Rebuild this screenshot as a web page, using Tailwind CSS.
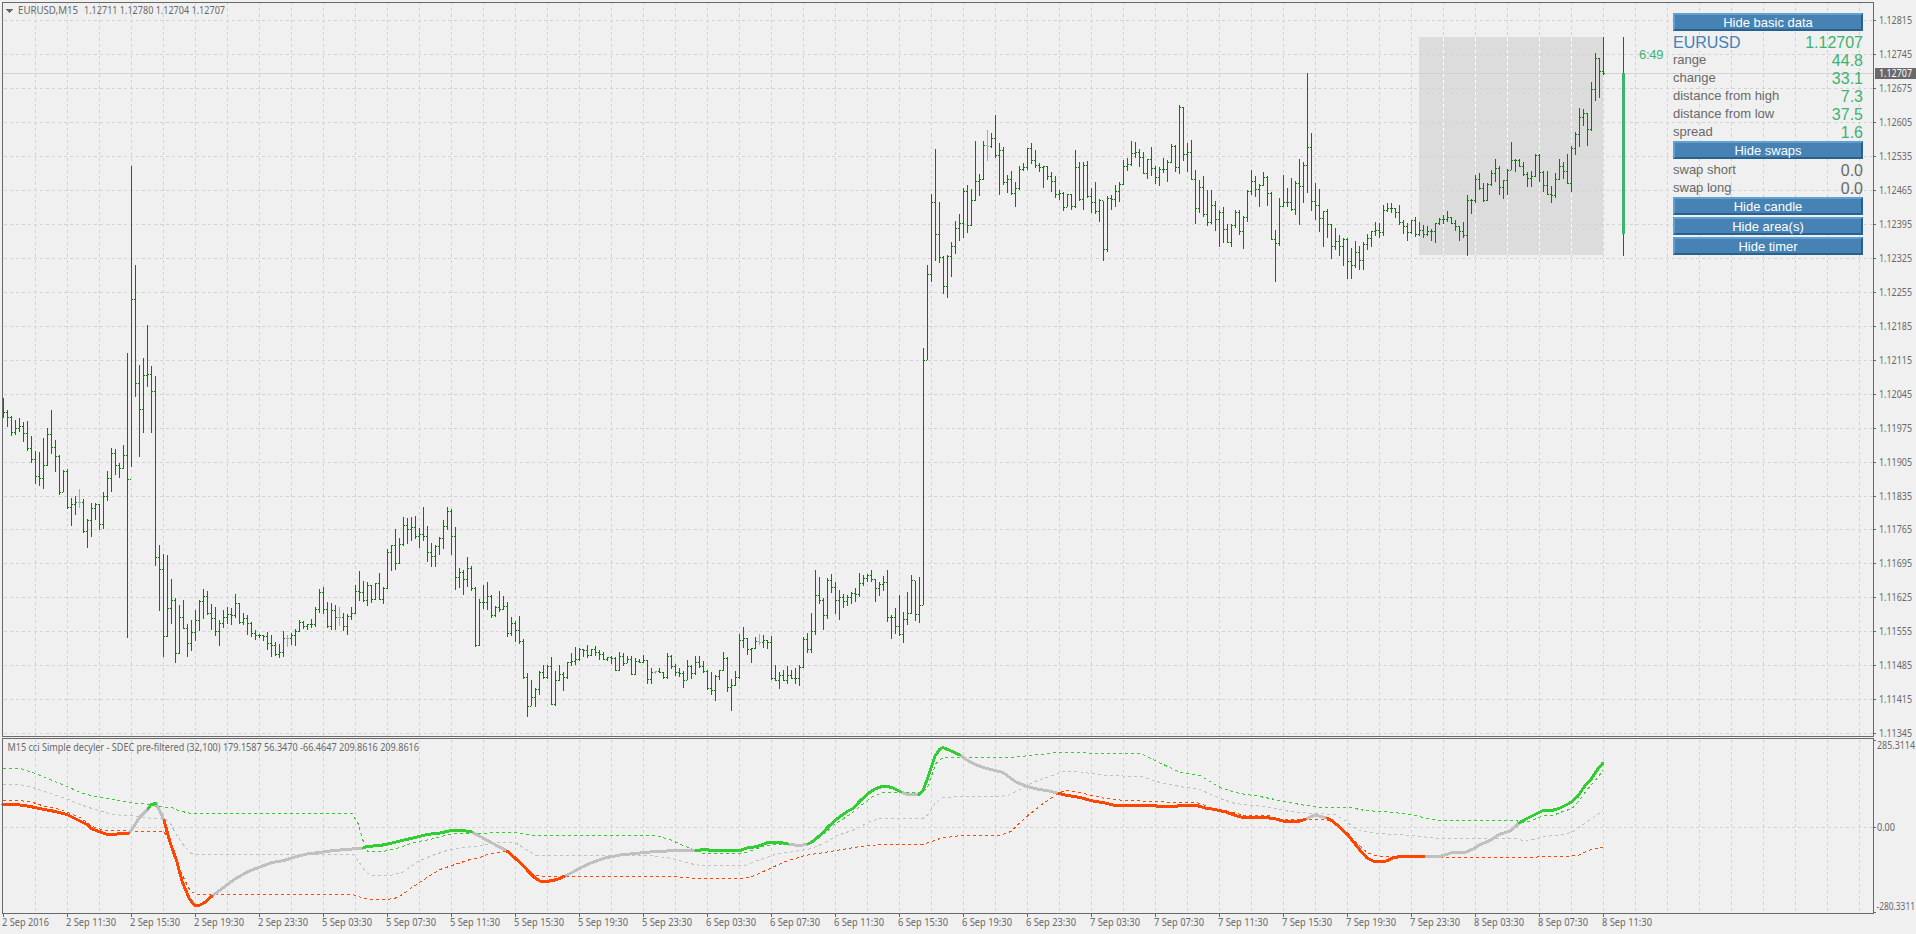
<!DOCTYPE html>
<html lang="en">
<head>
    <meta charset="UTF-8">
    <meta name="viewport" content="width=device-width, initial-scale=1.0">
    <title>EURUSD,M15</title>
    <script src="https://cdn.jsdelivr.net/npm/@tailwindcss/browser@4"></script>
</head>
<body class="relative w-[1916px] h-[934px] overflow-hidden bg-[#f0f0f0] font-['Liberation_Sans',Arial,sans-serif]">
    <svg id="chart" width="1916" height="934" viewBox="0 0 1916 934" class="block font-['Noto_Sans',sans-serif] text-[10px]">
        <g id="area"></g>
        <g id="grid" shape-rendering="crispEdges"></g>
        <g id="bars" shape-rendering="crispEdges"></g>
        <g id="indicator" fill="none" shape-rendering="crispEdges"></g>
        <g id="frame" shape-rendering="crispEdges" fill="#696969"></g>
        <g id="labels" fill="#696969"></g>
    </svg>

    <main class="absolute top-[13px] left-[1673px] w-[190px] flex flex-col text-[13px] leading-[18px] text-[#696969]">
        <button class="h-[18px] pt-[2px] flex items-center justify-center bg-[#4682b4] text-white border-2 border-t-[#5f9fd3] border-l-[#5f9fd3] border-b-[#286090] border-r-[#286090]">Hide basic data</button>
        <div class="flex justify-between h-[18px] mt-[2px] text-base leading-[18px]">
            <span class="text-[#4682b4] relative top-[1px]">EURUSD</span><span class="text-[#3cb371] relative top-[1px]">1.12707</span>
        </div>
        <div class="flex justify-between h-[18px]"><span>range</span><span class="text-base leading-[19px] text-[#3cb371]">44.8</span></div>
        <div class="flex justify-between h-[18px]"><span>change</span><span class="text-base leading-[19px] text-[#3cb371]">33.1</span></div>
        <div class="flex justify-between h-[18px]"><span>distance from high</span><span class="text-base leading-[19px] text-[#3cb371]">7.3</span></div>
        <div class="flex justify-between h-[18px]"><span>distance from low</span><span class="text-base leading-[19px] text-[#3cb371]">37.5</span></div>
        <div class="flex justify-between h-[18px]"><span>spread</span><span class="text-base leading-[19px] text-[#3cb371]">1.6</span></div>
        <button class="h-[18px] pt-[2px] flex items-center justify-center bg-[#4682b4] text-white border-2 border-t-[#5f9fd3] border-l-[#5f9fd3] border-b-[#286090] border-r-[#286090]">Hide swaps</button>
        <div class="flex justify-between h-[18px] mt-[2px]"><span>swap short</span><span class="text-base leading-[19px]">0.0</span></div>
        <div class="flex justify-between h-[18px]"><span>swap long</span><span class="text-base leading-[19px]">0.0</span></div>
        <div class="flex flex-col gap-[2px]">
            <button class="h-[18px] pt-[2px] flex items-center justify-center bg-[#4682b4] text-white border-2 border-t-[#5f9fd3] border-l-[#5f9fd3] border-b-[#286090] border-r-[#286090]">Hide candle</button>
            <button class="h-[18px] pt-[2px] flex items-center justify-center bg-[#4682b4] text-white border-2 border-t-[#5f9fd3] border-l-[#5f9fd3] border-b-[#286090] border-r-[#286090]">Hide area(s)</button>
            <button class="h-[18px] pt-[2px] flex items-center justify-center bg-[#4682b4] text-white border-2 border-t-[#5f9fd3] border-l-[#5f9fd3] border-b-[#286090] border-r-[#286090]">Hide timer</button>
        </div>
    </main>

    <script>
        const NS = 'http://www.w3.org/2000/svg';
        const layer = id => document.getElementById(id);

        function add(parent, tag, attrs, text) {
            const el = document.createElementNS(NS, tag);
            for (const key in attrs) el.setAttribute(key, attrs[key]);
            if (text !== undefined) el.textContent = text;
            parent.appendChild(el);
            return el;
        }
        function rect(parent, x, y, width, height, fill) {
            const attrs = { x, y, width, height };
            if (fill) attrs.fill = fill;
            return add(parent, 'rect', attrs);
        }
        function label(x, y, textLength, text, fill) {
            const attrs = { x, y, textLength, lengthAdjust: 'spacingAndGlyphs', style: 'white-space:pre' };
            if (fill) attrs.fill = fill;
            return add(layer('labels'), 'text', attrs, text);
        }

        // Session area
        rect(layer('area'), 1419, 37, 184, 218, '#dcdcdc');

        // Grid
        const priceRows = [20, 54, 88, 122, 156, 190, 224, 258, 292, 326, 360, 394, 428, 462, 496, 529, 563, 597, 631, 665, 699, 733];
        const grid = layer('grid');
        function dashed(d, stroke) {
            add(grid, 'path', { d, stroke, 'stroke-dasharray': '3 3', fill: 'none' });
        }
        priceRows.concat(827).forEach(y => dashed(`M4 ${y + 0.5}H1873`, '#d3d3d3'));
        for (let x = 35; x < 1873; x += 32) {
            dashed(`M${x + 0.5} 2V736`, '#d3d3d3');
            dashed(`M${x + 0.5} 740V913`, '#d3d3d3');
            if (x > 1419 && x < 1603) {
                rect(grid, x, 37, 1, 218, '#dcdcdc');
                dashed(`M${x + 0.5} 38V255`, '#ffffff');
            }
        }
        rect(grid, 3, 73, 1870, 1, '#d3d3d3');

        // Bars: high, low, close (in pixels), one every 4px
        const bars = `398,418,412 410,427,417 416,436,432 420,435,428 418,432,426 422,442,433 421,451,448 436,463,459 451,484,476 452,486,478
438,489,465 428,466,434 410,454,447 440,472,456 455,495,492 470,492,471 469,509,507 498,526,504 496,515,502 489,508,502
499,533,531 519,548,520 503,537,508 503,520,504 504,530,524 492,529,496 471,501,478 448,492,453 449,475,465 463,478,468
445,469,455 353,638,479 166,467,299 265,397,383 365,457,409 358,433,375 325,387,374 366,433,391 376,566,557 545,611,569
554,657,636 555,637,608 579,624,600 598,663,653 605,654,617 600,629,628 624,657,643 620,651,632 610,641,620 600,631,601
589,619,596 591,615,613 604,630,618 607,636,631 620,646,623 610,628,617 607,624,614 608,625,615 594,618,603 603,624,622
613,625,618 615,635,623 622,637,633 630,640,635 634,638,635 635,641,636 632,650,643 635,657,645 642,656,654 644,658,652
631,657,638 635,647,638 633,645,635 629,646,631 620,632,622 621,629,626 624,630,624 619,628,624 607,627,609 589,613,592
587,614,609 602,628,626 603,630,610 605,630,617 607,626,617 613,631,626 614,635,616 607,620,613 585,614,591 571,601,592
581,602,600 582,606,585 585,603,599 583,600,583 573,600,599 587,604,588 549,589,552 545,571,545 529,570,563 538,564,544
517,546,525 518,544,529 517,541,527 516,539,536 528,548,534 507,541,536 526,562,552 543,567,556 545,567,546 537,555,538
520,549,526 507,530,511 509,555,536 527,590,577 568,588,572 570,595,579 557,587,568 566,591,588 587,647,645 599,646,602
585,609,602 582,610,596 595,618,615 606,617,607 591,612,609 596,610,606 602,637,633 617,636,623 621,642,630 616,644,641
639,679,677 673,717,706 680,706,697 688,707,689 671,695,672 665,679,677 665,679,666 657,705,704 671,706,680 665,681,674
672,691,677 662,679,662 653,666,661 647,665,659 648,661,649 649,657,650 645,658,655 649,656,649 646,656,652 650,660,654
652,660,659 657,661,657 656,664,658 657,671,670 652,671,656 653,666,663 656,663,659 656,675,674 658,675,661 659,663,662
655,663,660 660,684,679 668,684,672 671,674,671 668,673,672 672,679,677 653,679,656 655,669,666 664,676,672 668,677,673
671,688,680 660,680,666 665,679,673 656,675,662 656,668,666 661,673,671 670,690,688 672,695,690 675,701,676 670,680,670
652,671,658 657,692,687 679,711,685 671,686,677 634,679,640 627,648,638 638,655,649 648,663,648 637,649,641 634,645,642
635,648,640 640,649,642 636,680,678 665,681,680 672,689,675 670,681,680 666,684,675 670,679,678 668,684,678 665,686,667
637,668,639 633,653,649 613,653,631 570,635,595 577,604,600 598,630,615 578,619,580 574,593,587 582,614,600 590,620,597
594,608,601 595,606,597 592,604,593 588,602,594 573,597,583 575,586,578 574,582,575 570,582,579 579,602,588 582,596,584
576,591,582 570,622,617 615,639,617 608,634,626 595,636,634 612,643,619 592,625,613 575,614,580 581,621,614 577,623,605
348,605,360 265,360,274 194,282,202 149,261,234 202,263,257 256,294,286 255,298,256 242,277,246 221,254,228 214,241,223
188,238,191 185,233,225 189,226,200 141,201,181 174,196,179 141,180,145 130,161,146 133,148,138 115,158,155 143,195,150
147,185,182 175,193,179 171,195,193 182,207,188 166,190,169 163,171,167 148,170,148 143,164,160 150,168,165 163,172,167
166,188,166 166,180,176 172,192,181 176,198,194 190,200,193 192,211,207 194,207,194 194,210,206 150,208,167 162,201,199
162,210,165 161,198,196 188,213,202 182,214,211 199,222,200 201,261,249 196,252,198 195,210,199 185,207,191 182,202,184
160,185,166 158,171,164 141,166,153 142,158,152 149,167,157 152,174,173 159,179,159 147,176,168 166,184,177 167,186,169
158,173,169 160,182,162 144,163,146 145,172,167 105,174,107 107,161,154 143,172,152 140,180,179 170,224,208 180,213,187
176,217,214 190,226,222 190,224,205 201,231,219 210,247,212 207,243,229 224,243,242 224,247,225 210,228,212 210,235,231
216,249,217 190,222,191 170,195,181 176,197,189 184,207,185 172,186,177 176,206,193 192,240,239 230,282,243 198,246,206
175,207,202 188,207,202 178,211,209 181,215,183 159,225,186 162,203,165 73,193,147 133,211,201 183,220,205 189,232,218
211,247,211 209,238,224 224,259,246 228,250,241 235,256,246 238,266,239 238,279,261 248,279,265 241,268,252 246,270,260
242,270,244 234,250,238 231,247,231 222,236,230 223,238,232 205,236,210 203,212,208 203,213,208 208,218,212 205,225,222
220,234,226 223,241,232 220,234,220 217,237,234 222,236,230 225,238,234 226,236,231 229,241,231 223,243,223 218,225,219
215,224,219 211,222,217 217,224,223 220,231,226 226,241,231 222,238,235 195,256,200 199,214,200 175,203,179 173,190,188
183,202,200 183,201,184 170,186,173 159,182,168 166,195,187 180,199,180 169,195,170 142,170,160 159,172,160 159,167,166
162,176,174 172,187,178 171,187,176 154,177,155 154,182,172 171,192,185 171,195,194 186,203,195 173,198,179 159,180,166
162,179,171 154,184,183 146,192,148 132,155,134 108,147,117 109,126,113 113,146,129 82,131,89 53,101,58 58,98,71 37,75,73`
            .split(/\s+/).map(b => b.split(',').map(Number));
        const doji = [19, 71, 84, 163, 189, 246];
        let prev = null;
        bars.forEach(([high, low, close], i) => {
            const x = 3 + i * 4;
            const color = doji.includes(i) ? '#a9a9a9' : '#008000';
            rect(layer('bars'), x, high, 1, low - high, color);
            rect(layer('bars'), x + 1, close, 1, 1, color);
            if (prev !== null) rect(layer('bars'), x - 1, prev, 1, 1, color);
            prev = close;
        });

        // Daily candle
        rect(layer('bars'), 1623, 37, 1, 219, '#008000');
        rect(layer('bars'), 1622, 73, 3, 161, '#3cb371');

        // Indicator bands
        const bands = [
            ['#32cd32', '3,768 20,768 30,771 45,777 67,786 80,792 95,796 112,799 130,802 148,804 157,806 172,807 178,810 191,813 352,813 358,823 363,840 368,851 383,851 397,848 413,842 430,839 445,835 455,833 475,833 500,832 516,832 533,835 655,835 670,839 683,845 698,851 703,853 742,853 752,850 765,845 775,844 790,843 800,844 812,843 820,836 828,830 836,823 850,814 862,804 873,796 883,792 919,792 927,788 932,774 936,763 943,757 1010,757 1030,755 1058,752 1083,752 1093,753 1141,753 1155,760 1180,772 1200,775 1210,781 1222,788 1240,793 1260,796 1280,800 1300,804 1320,807 1350,807 1365,810 1395,812 1415,815 1427,818 1440,820 1516,820 1522,822 1530,821 1543,815 1553,815 1560,812 1572,808 1580,799 1588,788 1596,779 1603,770'],
            ['#c0c0c0', '3,784 20,784 33,787 50,793 66,798 80,804 95,809 112,814 140,816 152,818 165,818 170,822 175,832 183,844 191,853 196,854 353,854 358,860 366,872 372,875 390,875 402,872 418,861 432,855 450,849 466,847 480,845 497,842 515,842 523,847 536,855 652,855 672,858 690,863 700,865 745,865 755,861 775,854 800,850 812,848 825,842 837,835 855,829 870,821 880,818 923,818 928,814 935,803 942,797 960,796 998,796 1008,795 1022,788 1035,781 1058,773 1063,771 1078,771 1105,775 1141,776 1160,782 1180,786 1200,789 1220,798 1235,803 1265,806 1290,811 1315,813 1335,814 1345,820 1357,829 1375,833 1400,834 1420,836 1440,838 1516,838 1523,840 1533,839 1545,836 1565,834 1575,830 1583,824 1592,818 1603,810'],
            ['#ff4500', '3,800 20,800 33,802 42,805 60,809 70,813 80,817 92,826 105,830 128,830 135,831 163,831 168,836 175,858 183,876 190,890 196,894 353,894 364,898 372,899 388,899 398,897 412,887 427,877 440,869 455,864 470,859 480,857 490,853 507,851 516,857 525,866 533,874 541,876 675,876 695,878 740,878 752,876 768,869 785,861 805,855 830,851 860,846 880,844 923,844 940,838 960,835 1000,835 1011,831 1017,825 1028,815 1043,803 1058,793 1065,790 1080,792 1105,798 1125,800 1160,801 1173,802 1197,802 1213,808 1230,811 1245,815 1268,815 1280,819 1325,819 1335,823 1347,832 1357,843 1367,852 1378,856 1400,856 1444,857 1530,857 1545,856 1565,856 1578,855 1588,850 1597,848 1603,847']
        ];
        bands.forEach(([stroke, points]) => {
            add(layer('indicator'), 'polyline', { points, stroke, 'stroke-dasharray': '3 3', transform: 'translate(0 0.5)' });
        });

        // Main indicator line, coloured by state
        const R = '#ff4500', S = '#c0c0c0', G = '#32cd32';
        const segments = [
            [S, '129,833 133,828 139,818 148,809'],
            [S, '156,803.5 160,811 164,820.5'],
            [S, '212,896 223,888 235,879 248,871.5 260,867 272,862.5 284,860.5 295,857 307,854 320,852.5 333,850.5 347,849.5 363,848'],
            [S, '472,832 480,836.5 492,843 507,851'],
            [S, '564,876.5 573,872 582,867 592,862.5 605,858 620,855 640,853 655,851.5 680,850.5 696,850.5'],
            [S, '788,844 795,845 803,845 808,844'],
            [S, '901,792 906,794 919,794.5'],
            [S, '960,755 967,760 975,764.5 985,768 995,770.5 1003,772.5 1009,777 1016,782 1027,786.5 1037,789 1049,791 1059,793.5'],
            [S, '1305,819.5 1310,817 1315,815 1321,816.5 1327,818'],
            [S, '1424,856.5 1440,856.5 1443,855.5 1453,852.5 1466,852 1474,848.5 1480,844.5 1488,841.5 1494,838 1499,834.5 1507,832 1510,831 1516,826 1519,823'],
            [R, '3,804.5 17,804.5 30,806.5 42,809 55,811.5 67,814.5 76,819 87,824.5 92,829 106,834 117,834 129,833'],
            [G, '148,809 151,804.5 156,803.5'],
            [R, '164,820.5 170,842 177,862 182,881 189,898 194,905 199,905.5 204,903 212,896'],
            [G, '363,848 367,846.5 380,845.5 390,843.5 400,841 413,838 427,834.5 440,833 451,830.5 463,830.5 472,832'],
            [R, '507,851 515,858 523,865.5 528,871 535,878 540,881 547,881.5 557,879.5 564,876.5'],
            [G, '696,850.5 705,849.5 712,850.5 740,850.5 747,848 757,846.5 768,842.5 780,842.5 788,844'],
            [G, '808,844 812,842 818,837 822,833.5 828,827 836,819.5 848,811 853,808.5 860,801 868,793.5 875,789 882,786.5 888,786.5 893,788 901,792'],
            [G, '919,794.5 923,790.5 927,780 931,768 935,756 940,749 943,747.5 950,750.5 960,755'],
            [R, '1059,793.5 1065,795 1080,797.5 1093,801 1105,803 1115,805.5 1153,805.5 1160,806.5 1175,806.5 1180,805.5 1197,805.5 1205,808 1215,809.5 1226,812 1237,816 1243,817.5 1265,817.5 1276,819 1285,821.5 1298,821.5 1305,819.5'],
            [R, '1327,818 1333,821.5 1340,827.5 1348,835 1356,845 1362,852.5 1367,858 1374,861.5 1385,861.5 1393,858 1400,856.5 1424,856.5'],
            [G, '1519,823 1525,819.5 1536,814 1543,810.5 1552,810.5 1559,808.5 1570,803 1578,796 1584,787 1592,778 1597,770 1603,763']
        ];
        segments.forEach(([stroke, points]) => {
            add(layer('indicator'), 'polyline', { points, stroke, 'stroke-width': 3, 'stroke-linecap': 'round', 'stroke-linejoin': 'round' });
        });

        // Window frames and axis ticks
        const frame = layer('frame');
        [[2, 735], [738, 176]].forEach(([y, h]) => {
            rect(frame, 2, y, 1872, 1);
            rect(frame, 2, y + h - 1, 1872, 1);
            rect(frame, 2, y, 1, h);
            rect(frame, 1873, y, 1, h);
        });
        priceRows.concat(740, 827, 912).forEach(y => rect(frame, 1874, y, 2, 1));
        for (let x = 3; x <= 1603; x += 64) rect(frame, x, 914, 1, 3);
        add(frame, 'path', { d: 'M6 9h7v1h-1v1h-1v1h-1v1h-1v-1h-1v-1h-1v-1h-1z' });

        // Labels
        label(18, 14, 60, 'EURUSD,M15');
        label(84, 14, 141, '1.12711 1.12780 1.12704 1.12707');
        label(7.5, 751, 411.5, 'M15 cci Simple decyler - SDEC pre-filtered (32,100) 179.1587 56.3470 -66.4647 209.8616 209.8616');
        priceRows.forEach((y, i) => label(1879, y + 4, 33, ((112815 - i * 70) / 100000).toFixed(5)));
        label(1877, 749, 38, '285.3114');
        label(1877, 831, 18, '0.00');
        label(1876.5, 910, 38.5, '-280.3311');
        rect(layer('labels'), 1875, 68, 41, 11, '#696969');
        label(1879, 77, 33, '1.12707', '#ffffff');

        const times = ['03:30', '07:30', '11:30', '15:30', '19:30', '23:30'];
        const dates = ['2 Sep 2016'];
        times.slice(2).forEach(t => dates.push('2 Sep ' + t));
        ['5', '6', '7'].forEach(d => times.forEach(t => dates.push(d + ' Sep ' + t)));
        times.slice(0, 3).forEach(t => dates.push('8 Sep ' + t));
        dates.forEach((d, i) => label(2 + i * 64, 926, i ? 50 : 47, d));

        // Bar timer
        add(layer('labels'), 'text', { x: 1639, y: 59, textLength: 24.5, fill: '#3cb371', class: "font-['Liberation_Sans',Arial,sans-serif] text-[13px]" }, '6:49');
    </script>
</body>
</html>
